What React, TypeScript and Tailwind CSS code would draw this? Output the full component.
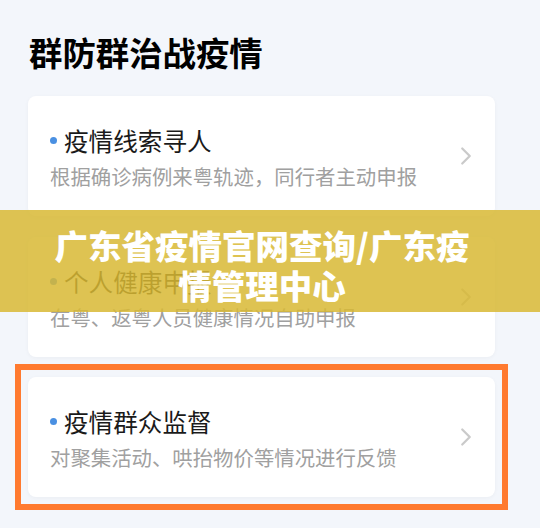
import { ChevronRight } from "lucide-react"

const cjk = { fontFamily: '"Noto Sans CJK SC", "Noto Sans", sans-serif' }

interface Item {
  title: string
  desc: string
}

const items: Item[] = [
  { title: "疫情线索寻人", desc: "根据确诊病例来粤轨迹，同行者主动申报" },
  { title: "个人健康申报", desc: "在粤、返粤人员健康情况自助申报" },
  { title: "疫情群众监督", desc: "对聚集活动、哄抬物价等情况进行反馈" },
]

function Card({ item }: { item: Item }) {
  return (
    <div className="flex h-[120px] w-[467px] items-center justify-between rounded-lg bg-white pl-[22px] pr-[14px] shadow-[0_1px_4px_rgba(0,0,0,0.04)]">
      <div className="flex flex-col pt-[2px]">
        <div className="flex items-center gap-[7px]">
          <span className="h-[7px] w-[7px] rounded-full bg-[#4a90e2]" />
          <span className="text-[24.6px] leading-none text-[#1a1a1a]">{item.title}</span>
        </div>
        <p className="mt-[13px] text-[20.4px] leading-none text-[#a0a0a0]">{item.desc}</p>
      </div>
      <ChevronRight size={30} strokeWidth={1.8} className="text-[#cacaca]" />
    </div>
  )
}

export default function App() {
  return (
    <div className="relative h-[528px] w-[540px] overflow-hidden bg-[#f3f6fb]" style={cjk}>
      <h1 className="pl-[29px] pt-[35px] text-[33.4px] font-bold leading-none text-black">群防群治战疫情</h1>
      <div className="mt-[28px] flex flex-col pl-[28px]">
        <Card item={items[0]} />
        <div className="mt-[21px]">
          <Card item={items[1]} />
        </div>
      </div>
      <div className="ml-[15px] mt-[7px] w-[493px] border-[6px] border-[#ff7a2f] p-[7px]">
        <Card item={items[2]} />
      </div>

      <div className="absolute left-0 top-[210px] flex h-[102px] w-full flex-col items-center justify-center bg-[#d8b834]/85 pr-[16px] pt-[8px]">
        <p className="text-[33.5px] font-black leading-[40px] text-white">广东省疫情官网查询/广东疫</p>
        <p className="text-[33.5px] font-black leading-[40px] text-white">情管理中心</p>
      </div>
    </div>
  )
}
